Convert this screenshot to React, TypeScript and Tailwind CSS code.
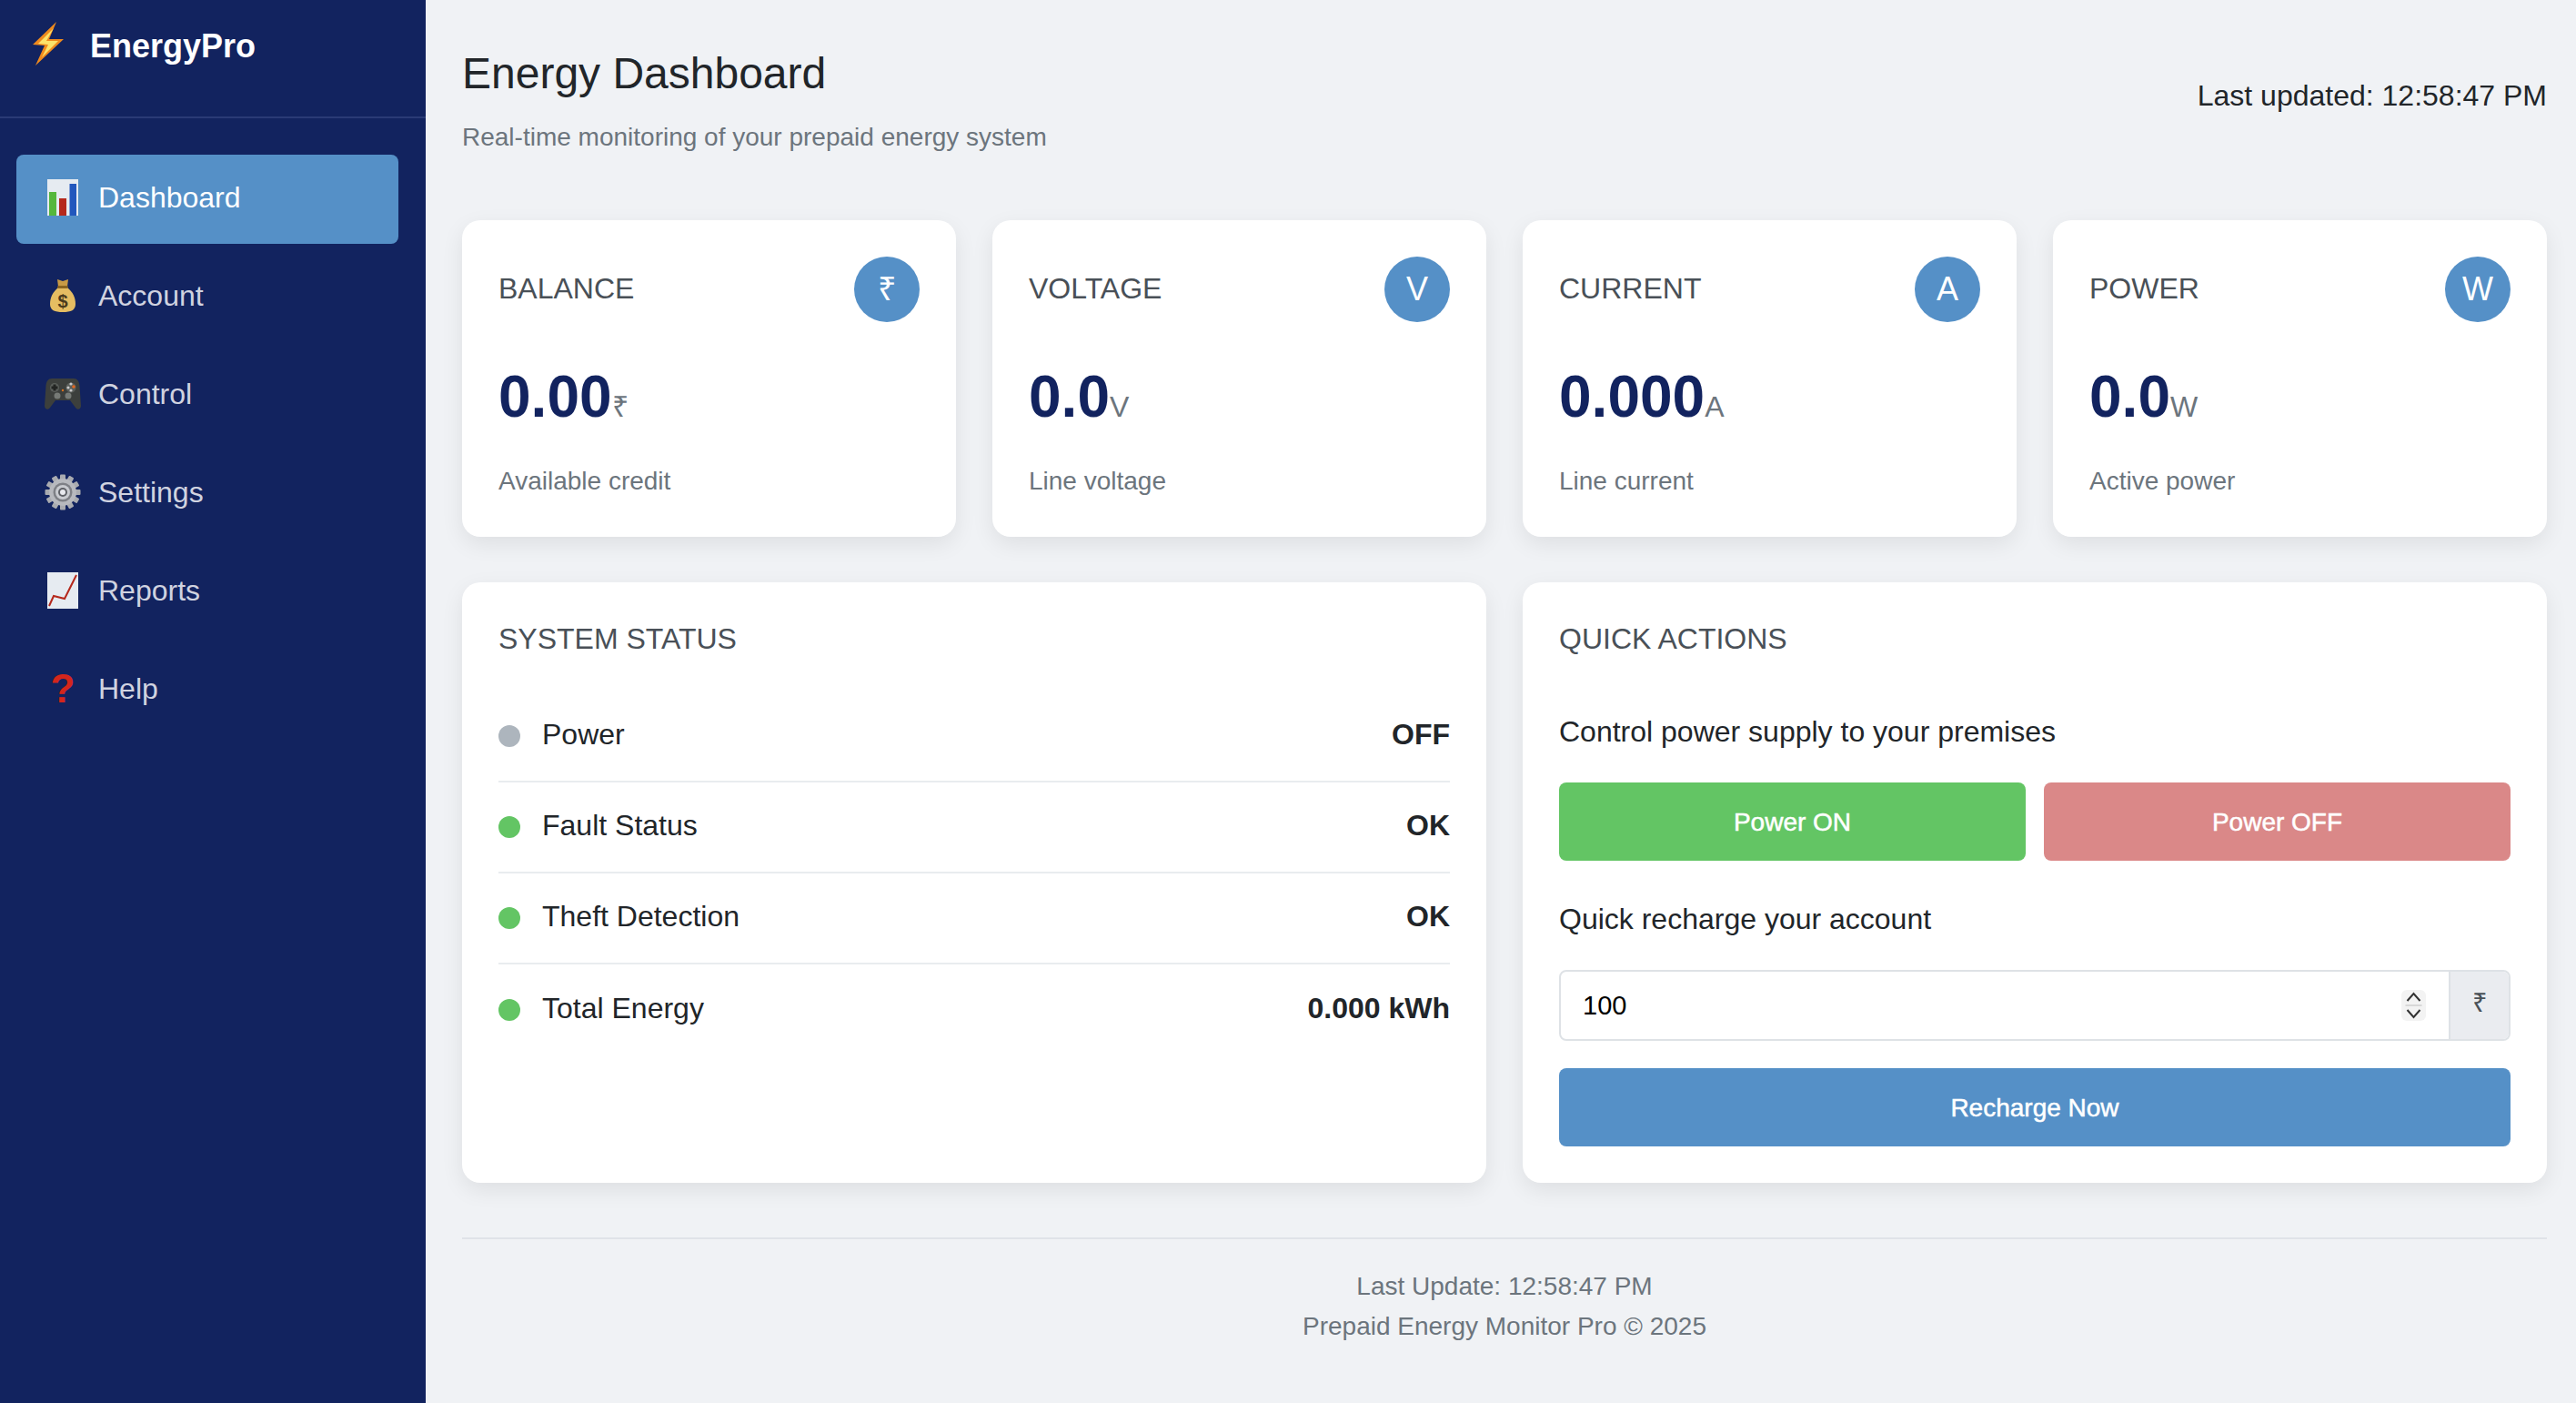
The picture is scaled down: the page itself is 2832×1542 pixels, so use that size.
import type { ReactNode } from 'react';

function Bolt() {
  return (
    <svg viewBox="0 0 34 48" className="w-[34px] h-[48px]">
      <path d="M26 0 L0 25 L13 26 L3 48 L34 19 L18 19 Z" fill="#f08a1d" />
      <path d="M23 7 L6 24 L17 25 L10 39 L28 21 L15 21 Z" fill="#fde36a" />
    </svg>
  );
}

function BarChart() {
  return (
    <svg viewBox="0 0 34 40" className="w-[34px] h-[40px]">
      <rect width="34" height="40" fill="#e6ebf1" />
      <rect x="2" y="14" width="8" height="26" fill="#55b73c" />
      <rect x="13" y="21" width="8" height="19" fill="#b5281c" />
      <rect x="24.5" y="5" width="7.5" height="35" fill="#2257bd" />
    </svg>
  );
}

function MoneyBag() {
  return (
    <svg viewBox="0 0 28 38" className="w-[28px] h-[38px]">
      <path d="M8 1 L14 3 L20 1 L19 9 L9 9 Z" fill="#c89a45" />
      <path d="M9 10 C3 15 0 21 0 28 C0 35 5 37 14 37 C23 37 28 35 28 28 C28 21 25 15 19 10 Z" fill="#e5bd62" />
      <rect x="8" y="8" width="12" height="3" rx="1.5" fill="#8a6420" />
      <text x="14" y="32" textAnchor="middle" fontSize="20" fontWeight="700" fill="#4a3a1c" fontFamily="Liberation Sans, sans-serif">$</text>
    </svg>
  );
}

function Gamepad() {
  return (
    <svg viewBox="0 0 40 36" className="w-[40px] h-[36px]">
      <path d="M8 1 H32 C36 1 38 4 38.5 9 L40 31 C40 35 36 36 34 33 L28 25 H12 L6 33 C4 36 0 35 0 31 L1.500 9 C2 4 4 1 8 1 Z" fill="#3c3f3c" />
      <circle cx="11" cy="11" r="5" fill="#5b5f5b" />
      <path d="M9.500 7.500 H12.500 V9.500 H14.500 V12.500 H12.500 V14.500 H9.500 V12.500 H7.500 V9.500 H9.500 Z" fill="#222422" />
      <circle cx="29" cy="11" r="5.500" fill="#5b5f5b" />
      <circle cx="32" cy="10" r="1.800" fill="#e2671f" />
      <circle cx="29" cy="7" r="1.600" fill="#c9c9c9" />
      <circle cx="26" cy="11" r="1.600" fill="#c9c9c9" />
      <circle cx="29" cy="14" r="1.600" fill="#c9c9c9" />
      <circle cx="14" cy="20" r="3.500" fill="#767a76" />
      <circle cx="26" cy="20" r="3.500" fill="#767a76" />
      <circle cx="20" cy="14" r="1.200" fill="#d9701f" />
    </svg>
  );
}

function Gear() {
  const teeth = [0, 30, 60, 90, 120, 150, 180, 210, 240, 270, 300, 330];
  return (
    <svg viewBox="0 0 40 40" className="w-[40px] h-[40px]">
      {teeth.map((a) => (
        <rect key={a} x="17" y="0.500" width="6" height="8" rx="1" fill="#a9abb0" transform={`rotate(${a} 20 20)`} />
      ))}
      <circle cx="20" cy="20" r="15" fill="#b7b9be" />
      <circle cx="20" cy="20" r="10.500" fill="#7e8086" />
      <circle cx="20" cy="20" r="8" fill="#c9cbd0" />
      <circle cx="20" cy="20" r="5" fill="#5f6167" />
      <circle cx="20" cy="20" r="3" fill="#e8e9ee" />
    </svg>
  );
}

function LineChart() {
  return (
    <svg viewBox="0 0 34 40" className="w-[34px] h-[40px]">
      <rect width="34" height="40" fill="#e6ebf1" />
      <path d="M2 37 L7 26 L19 29 L32 3" fill="none" stroke="#b5281c" strokeWidth="2" />
    </svg>
  );
}

function QuestionMark() {
  return <span className="text-[44px] leading-[40px] font-bold text-[#d3261c]">?</span>;
}

const navItems: { label: string; icon: ReactNode; active?: boolean }[] = [
  { label: 'Dashboard', icon: <BarChart />, active: true },
  { label: 'Account', icon: <MoneyBag /> },
  { label: 'Control', icon: <Gamepad /> },
  { label: 'Settings', icon: <Gear /> },
  { label: 'Reports', icon: <LineChart /> },
  { label: 'Help', icon: <QuestionMark /> },
];

const stats = [
  { title: 'BALANCE', badge: '₹', value: '0.00', unit: '₹', note: 'Available credit' },
  { title: 'VOLTAGE', badge: 'V', value: '0.0', unit: 'V', note: 'Line voltage' },
  { title: 'CURRENT', badge: 'A', value: '0.000', unit: 'A', note: 'Line current' },
  { title: 'POWER', badge: 'W', value: '0.0', unit: 'W', note: 'Active power' },
];

const statusRows = [
  { label: 'Power', value: 'OFF', dot: 'bg-[#adb5bd]' },
  { label: 'Fault Status', value: 'OK', dot: 'bg-[#63c564]' },
  { label: 'Theft Detection', value: 'OK', dot: 'bg-[#63c564]' },
  { label: 'Total Energy', value: '0.000 kWh', dot: 'bg-[#63c564]' },
];

export default function App() {
  return (
    <div className="flex min-h-[1542px] bg-[#f0f2f5] font-['Liberation_Sans',Arial,sans-serif] text-[#212529]">
      <aside className="w-[468px] shrink-0 bg-[#12235f]">
        <div className="h-[130px] border-b-2 border-[#2a3a75] pl-[36px] pt-[24px] flex items-start gap-[29px]">
          <Bolt />
          <span className="text-[36px] leading-[53px] font-bold text-white">EnergyPro</span>
        </div>
        <nav className="flex flex-col gap-[10px] pl-[18px] pr-[30px] pt-[40px]">
          {navItems.map((item) => (
            <div
              key={item.label}
              className={`h-[98px] rounded-[8px] pl-[31px] pb-[5px] flex items-center gap-[19px] text-[32px] ${
                item.active ? 'bg-[#5590c7] text-white' : 'text-[#d0d3e0]'
              }`}
            >
              <span className="w-[40px] flex justify-center">{item.icon}</span>
              <span>{item.label}</span>
            </div>
          ))}
        </nav>
      </aside>

      <main className="flex-1 pl-[40px] pr-[32px] pb-[40px]">
        <header className="flex items-center justify-between h-[242px] pb-[20px]">
          <div>
            <h1 className="text-[48px] leading-[56px] font-normal">Energy Dashboard</h1>
            <p className="mt-[24px] text-[28px] leading-[36px] text-[#6c757d]">Real-time monitoring of your prepaid energy system</p>
          </div>
          <div className="text-[32px] mb-[12px]">Last updated: 12:58:47 PM</div>
        </header>

        <section className="grid grid-cols-4 gap-[40px]">
          {stats.map((s) => (
            <div key={s.title} className="h-[348px] rounded-[20px] bg-white p-[40px] shadow-[0_8px_24px_rgba(0,0,0,0.08)]">
              <div className="flex justify-between">
                <span className="text-[32px] leading-[70px] text-[#495057]">{s.title}</span>
                <span className="w-[72px] h-[72px] rounded-full bg-[#5590c7] text-white text-[36px] flex items-center justify-center">
                  {s.badge}
                </span>
              </div>
              <div className="mt-[44px] flex items-baseline text-[#12235f] leading-[76px]">
                <span className="text-[64px] font-bold">{s.value}</span>
                <span className="text-[32px] font-normal text-[#6c757d]">{s.unit}</span>
              </div>
              <div className="mt-[26px] text-[28px] leading-[36px] text-[#6c757d]">{s.note}</div>
            </div>
          ))}
        </section>

        <section className="mt-[50px] grid grid-cols-2 gap-[40px]">
          <div className="h-[660px] rounded-[20px] bg-white p-[40px] shadow-[0_8px_24px_rgba(0,0,0,0.08)]">
            <h2 className="text-[32px] leading-[44px] text-[#495057] font-normal">SYSTEM STATUS</h2>
            <div className="mt-[36px]">
              {statusRows.map((r, i) => (
                <div
                  key={r.label}
                  className={`h-[100px] flex items-center ${i < statusRows.length - 1 ? 'border-b-2 border-[#e9ecef]' : ''}`}
                >
                  <span className={`w-[24px] h-[24px] rounded-full ${r.dot}`} />
                  <span className="ml-[24px] mb-[4px] text-[32px]">{r.label}</span>
                  <span className="ml-auto mb-[4px] text-[32px] font-bold">{r.value}</span>
                </div>
              ))}
            </div>
          </div>

          <div className="h-[660px] rounded-[20px] bg-white p-[40px] shadow-[0_8px_24px_rgba(0,0,0,0.08)]">
            <h2 className="text-[32px] leading-[44px] text-[#495057] font-normal">QUICK ACTIONS</h2>
            <p className="mt-[58px] text-[32px] leading-[44px]">Control power supply to your premises</p>
            <div className="mt-[34px] grid grid-cols-2 gap-[20px]">
              <button className="h-[86px] pt-[2px] rounded-[8px] bg-[#63c564] text-white text-[28px] [-webkit-text-stroke:0.5px_white]">Power ON</button>
              <button className="h-[86px] pt-[2px] rounded-[8px] bg-[#da8888] text-white text-[28px] [-webkit-text-stroke:0.5px_white]">Power OFF</button>
            </div>
            <p className="mt-[42px] text-[32px] leading-[44px]">Quick recharge your account</p>
            <div className="mt-[34px] h-[78px] flex rounded-[8px] border-2 border-[#dee2e6] overflow-hidden">
              <div className="flex-1 flex items-center pl-[24px] pr-[25px] text-[29px] text-black">
                <span className="mt-[2px]">100</span>
                <span className="ml-auto w-[27px] h-[34px] rounded-[6px] bg-[#f3f3f3] flex items-center justify-center">
                  <svg viewBox="0 0 26 34" className="w-[27px] h-[34px]">
                    <path d="M6 12 L13 4 L20 12" fill="none" stroke="#333" strokeWidth="2" />
                    <rect x="4" y="16" width="18" height="2" fill="#d8d8d8" />
                    <path d="M6 22 L13 30 L20 22" fill="none" stroke="#333" strokeWidth="2" />
                  </svg>
                </span>
              </div>
              <div className="w-[66px] border-l-2 border-[#dee2e6] bg-[#eaecf0] flex items-center justify-center text-[29px] text-[#495057] pb-[4px]">₹</div>
            </div>
            <button className="mt-[30px] w-full h-[86px] pt-[2px] rounded-[8px] bg-[#5590c7] text-white text-[28px] [-webkit-text-stroke:0.5px_white]">Recharge Now</button>
          </div>
        </section>

        <footer className="mt-[60px] border-t-2 border-[#e0e3e8] pt-[30px] text-center text-[28px] leading-[44px] text-[#6c757d]">
          <div>Last Update: 12:58:47 PM</div>
          <div>Prepaid Energy Monitor Pro © 2025</div>
        </footer>
      </main>
    </div>
  );
}
